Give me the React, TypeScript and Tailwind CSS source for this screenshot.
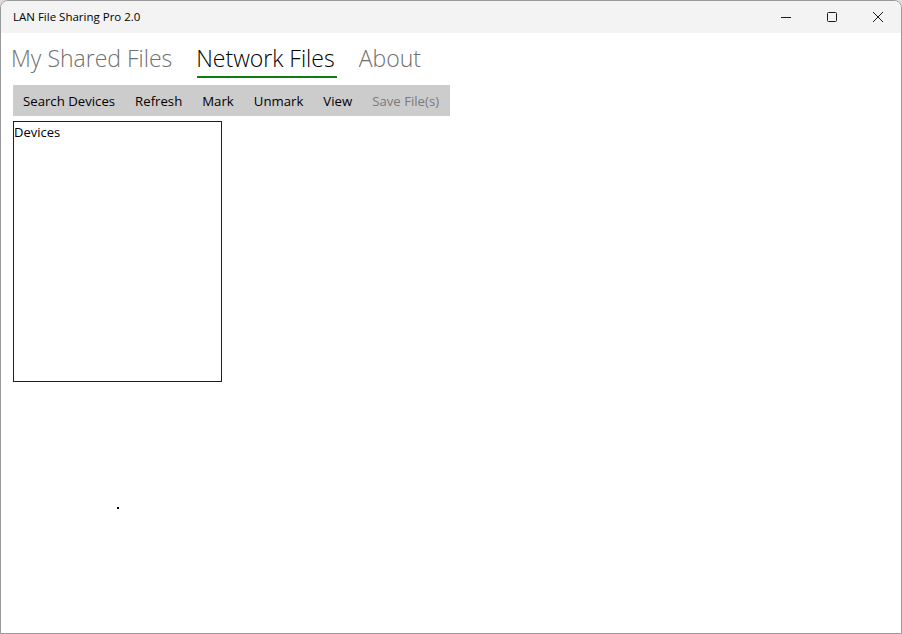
import React from "react";

const tabs = ["My Shared Files", "Network Files", "About"];
const actions = ["Search Devices", "Refresh", "Mark", "Unmark", "View"];

function CaptionButtons() {
  return (
    <div className="flex h-full">
      <button className="w-[46px] h-full flex items-center justify-center">
        <svg width="10" height="10" viewBox="0 0 10 10">
          <path d="M0 5.5h10" stroke="#1a1a1a" strokeWidth="1" />
        </svg>
      </button>
      <button className="w-[46px] h-full flex items-center justify-center">
        <svg width="10" height="10" viewBox="0 0 10 10">
          <rect x="0.5" y="0.5" width="9" height="9" rx="1" fill="none" stroke="#1a1a1a" strokeWidth="1" />
        </svg>
      </button>
      <button className="w-[46px] h-full flex items-center justify-center">
        <svg width="10" height="10" viewBox="0 0 10 10">
          <path d="M0 0L10 10M10 0L0 10" stroke="#1a1a1a" strokeWidth="1" />
        </svg>
      </button>
    </div>
  );
}

export default function App() {
  return (
    <div
      className="w-[902px] h-[634px] bg-[#dcdcdc] overflow-hidden"
      style={{ fontFamily: '"Open Sans", "Noto Sans", sans-serif' }}
    >
      <div className="w-full h-full flex flex-col bg-white border border-[#9a9a9a] rounded-t-[8px] overflow-hidden">
        {/* title bar */}
        <div className="h-[32px] shrink-0 flex items-center justify-between bg-[#f3f3f3] pl-3">
          <span className="text-[11.5px] text-black whitespace-nowrap">LAN File Sharing Pro 2.0</span>
          <CaptionButtons />
        </div>

        {/* tabs */}
        <div className="flex items-start gap-[24px] pl-[10px] pt-[9px] h-[52px] shrink-0">
          {tabs.map((t) => {
            const active = t === "Network Files";
            return (
              <div key={t} className="flex flex-col">
                <span
                  className={`text-[23px] leading-[32px] font-light whitespace-nowrap ${
                    active ? "text-black" : "text-[#707070]"
                  }`}
                >
                  {t}
                </span>
                <div className={`h-[2px] mt-[2px] ml-[1px] -mr-[2px] ${active ? "bg-[#107c10]" : "bg-transparent"}`} />
              </div>
            );
          })}
        </div>

        {/* toolbar */}
        <div className="ml-[12px] w-[437px] h-[31px] bg-[#cccccc] flex items-center pl-[10px] pt-[2px] gap-[20px] text-[13.2px]">
          {actions.map((a) => (
            <span key={a} className="text-black whitespace-nowrap">
              {a}
            </span>
          ))}
          <span className="text-[#7a7a7a] whitespace-nowrap">Save File(s)</span>
        </div>

        {/* devices list */}
        <div className="ml-[12px] mt-[5px] w-[209px] h-[261px] border border-[#1f1f1f] text-[13px] text-black leading-[20px]">
          Devices
        </div>

        <div className="ml-[116px] mt-[125px] w-[2px] h-[2px] bg-black" />
      </div>
    </div>
  );
}
